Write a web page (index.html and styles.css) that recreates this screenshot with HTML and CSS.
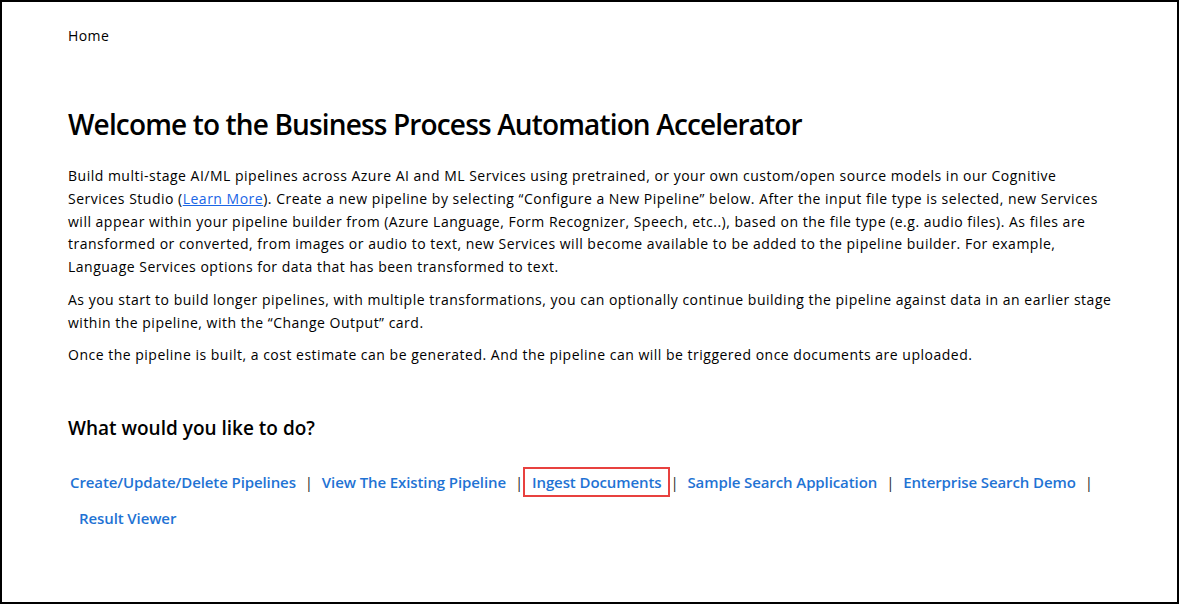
FILE: index.html
```html
<!DOCTYPE html>
<html lang="en">
<head>
<meta charset="utf-8">
<title>Business Process Automation Accelerator</title>
<link rel="stylesheet" href="styles.css">
</head>
<body>
<div class="frame">
  <nav class="breadcrumb">Home</nav>
  <main class="content">
    <h1 class="title">Welcome to the Business Process Automation Accelerator</h1>
    <p class="para">Build multi-stage AI/ML pipelines across Azure AI and ML Services using pretrained, or your own custom/open source models in our Cognitive Services Studio (<a class="inline-link" href="#">Learn More</a>). Create a new pipeline by selecting “Configure a New Pipeline” below. After the input file type is selected, new Services will appear within your pipeline builder from (Azure Language, Form Recognizer, Speech, etc..), based on the file type (e.g. audio files). As files are transformed or converted, from images or audio to text, new Services will become available to be added to the pipeline builder. For example, Language Services options for data that has been transformed to text.</p>
    <p class="para">As you start to build longer pipelines, with multiple transformations, you can optionally continue building the pipeline against data in an earlier stage within the pipeline, with the “Change Output” card.</p>
    <p class="para">Once the pipeline is built, a cost estimate can be generated. And the pipeline can will be triggered once documents are uploaded.</p>
    <h2 class="subtitle">What would you like to do?</h2>
    <div class="actions">
      <a class="action first" href="#">Create/Update/Delete Pipelines</a><span class="sep">|</span>
      <a class="action" href="#">View The Existing Pipeline</a><span class="sep">|</span>
      <a class="action highlighted" href="#">Ingest Documents</a><span class="sep">|</span>
      <a class="action" href="#">Sample Search Application</a><span class="sep">|</span>
      <a class="action" href="#">Enterprise Search Demo</a><span class="sep">|</span>
      <a class="action wrapped" href="#">Result Viewer</a>
    </div>
  </main>
</div>
</body>
</html>
```

FILE: styles.css
```css
html, body {
  margin: 0;
  padding: 0;
  background: #ffffff;
}
body {
  font-family: "Open Sans", "Noto Sans", "Liberation Sans", sans-serif;
  color: #000000;
}
.frame {
  box-sizing: border-box;
  width: 1179px;
  height: 604px;
  border: 2px solid #000000;
  padding: 0 62px 0 66px;
}
.breadcrumb {
  font-size: 14px;
  line-height: 20px;
  padding-top: 24px;
  letter-spacing: 0.4px;
  color: #000;
}
.content {
  padding-top: 59px;
}
.title {
  font-size: 28px;
  font-weight: 600;
  line-height: 38px;
  letter-spacing: -0.85px;
  margin: 0 0 22px 0;
}
.para {
  font-size: 14px;
  line-height: 22.75px;
  letter-spacing: 0.5px;
  margin: 0 0 10px 0;
}
.inline-link {
  color: #1a66e6;
  text-decoration: underline;
}
.subtitle {
  font-size: 19px;
  font-weight: 600;
  line-height: 26px;
  margin: 48px 0 0 0;
}
.actions {
  display: flex;
  flex-wrap: wrap;
  align-items: center;
  margin-top: 26px;
  row-gap: 6px;
  font-size: 15px;
  font-weight: 600;
  line-height: 22px;
  letter-spacing: -0.1px;
}
.action {
  color: #1f73d4;
  text-decoration: none;
  padding: 2px 7px;
  border: 2px solid transparent;
}
.action.first {
  padding-left: 0;
}
.action.highlighted {
  border-color: #e8413f;
}
.action.wrapped {
  padding-left: 9px;
}
.sep {
  display: inline-block;
  width: 8px;
  text-align: center;
  color: #2a2a2a;
  font-weight: 400;
}
```
